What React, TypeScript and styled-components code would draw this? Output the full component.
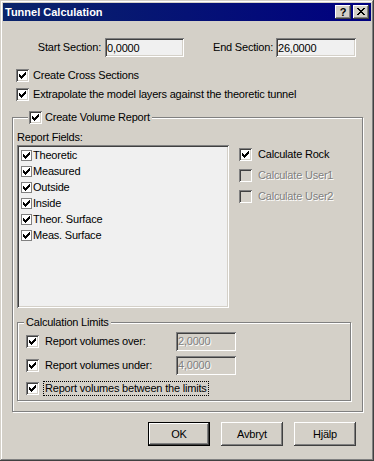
import React from 'react';
import styled, { createGlobalStyle } from 'styled-components';

const FACE = '#d4d0c8';
const FIELD = '#f0f0f0';
const raised = `inset -1px -1px #404040, inset 1px 1px #ffffff, inset -2px -2px #808080, inset 2px 2px ${FACE}`;
const sunken = `inset 1px 1px #808080, inset -1px -1px #ffffff, inset 2px 2px #404040, inset -2px -2px ${FACE}`;

const GlobalStyle = createGlobalStyle`
  html, body { margin: 0; padding: 0; background: ${FACE}; }
  body { font-family: "Liberation Sans", Arial, sans-serif; font-size: 11px; }
  *, *::before, *::after { box-sizing: border-box; }
`;

const Window = styled.div`
  width: 374px;
  height: 461px;
  padding: 3px;
  background: ${FACE};
  box-shadow: inset -1px -1px #404040, inset 1px 1px ${FACE}, inset -2px -2px #808080, inset 2px 2px #ffffff;
  display: flex;
  flex-direction: column;
  font-family: "Liberation Sans", Arial, sans-serif;
  font-size: 11px;
  line-height: 13px;
  color: #000;
`;

const TitleBar = styled.div`
  height: 18px;
  flex: none;
  display: flex;
  align-items: center;
  justify-content: space-between;
  padding: 0 2px;
  background: linear-gradient(to right, #0a246a, #000080);
  color: #fff;
  font-weight: bold;
`;

const TitleText = styled.span`
  white-space: nowrap;
`;

const TitleButtons = styled.div`
  display: flex;
  gap: 2px;
`;

const TitleButton = styled.span`
  width: 16px;
  height: 14px;
  display: flex;
  align-items: center;
  justify-content: center;
  background: ${FACE};
  box-shadow: ${raised};
  color: #000;
  font-weight: bold;
  font-size: 11px;
  line-height: 14px;
  padding-bottom: 1px;
`;

const Content = styled.div`
  display: flex;
  flex-direction: column;
  align-items: flex-start;
  letter-spacing: -0.2px;
`;

const SectionRow = styled.div`
  display: flex;
  align-items: center;
  height: 19px;
  margin-top: 17px;
`;

const FieldLabel = styled.label<{ $w: number; $mr: number }>`
  width: ${(p) => p.$w}px;
  margin-right: ${(p) => p.$mr}px;
  text-align: right;
  white-space: nowrap;
`;

const TextField = styled.input<{ $w: number }>`
  width: ${(p) => p.$w}px;
  height: 19px;
  margin: 0;
  padding: 0 2px;
  border: none;
  outline: none;
  font: inherit;
  letter-spacing: inherit;
  color: #000;
  background: ${FIELD};
  box-shadow: ${sunken};
  &:disabled {
    background: ${FACE};
    color: #808080;
    -webkit-text-fill-color: #808080;
    text-shadow: 1px 1px #ffffff;
    opacity: 1;
  }
`;

const MainOptions = styled.div`
  display: flex;
  flex-direction: column;
  gap: 6px;
  margin: 12px 0 0 13px;
`;

const CheckRow = styled.div<{ $gap: number; $disabled?: boolean }>`
  display: flex;
  align-items: center;
  gap: ${(p) => p.$gap}px;
  height: 13px;
  white-space: nowrap;
  color: ${(p) => (p.$disabled ? '#808080' : '#000')};
  text-shadow: ${(p) => (p.$disabled ? '1px 1px #ffffff' : 'none')};
`;

const Box = styled.span<{ $disabled?: boolean }>`
  width: 13px;
  height: 13px;
  flex: none;
  display: inline-flex;
  align-items: center;
  justify-content: center;
  background: ${(p) => (p.$disabled ? FACE : '#ffffff')};
  box-shadow: ${sunken};
`;

const SmallBox = styled.span`
  width: 11px;
  height: 11px;
  flex: none;
  display: inline-flex;
  align-items: center;
  justify-content: center;
  background: #ffffff;
  border: 1px solid #808080;
`;

const Group = styled.fieldset`
  margin: 0;
  min-width: 0;
  border: 1px solid #808080;
  box-shadow: inset 1px 1px #ffffff, 1px 1px #ffffff;
`;

const VolumeGroup = styled(Group)`
  width: 351px;
  margin: 10px 0 0 9px;
  padding: 7px 10px 10px 4px;
`;

const LimitsGroup = styled(Group)`
  width: 334px;
  margin-top: 8px;
  padding: 2px 0 3px 6px;
`;

const Legend = styled.legend<{ $ml: number; $pl: number }>`
  margin-left: ${(p) => p.$ml}px;
  padding: 0 2px 0 ${(p) => p.$pl}px;
  background: ${FACE};
  height: 13px;
  line-height: 13px;
  white-space: nowrap;
`;

const FieldsArea = styled.div`
  display: flex;
  align-items: flex-start;
`;

const FieldsColumn = styled.div`
  width: 212px;
  display: flex;
  flex-direction: column;
  gap: 1px;
`;

const ListBox = styled.div`
  width: 212px;
  height: 163px;
  padding: 2px 0 0 4px;
  background: ${FIELD};
  box-shadow: ${sunken};
`;

const ListItem = styled.div`
  height: 16px;
  display: flex;
  align-items: center;
  gap: 1px;
  white-space: nowrap;
`;

const CalcColumn = styled.div`
  display: flex;
  flex-direction: column;
  gap: 8px;
  margin: 17px 0 0 10px;
`;

const LimitsBody = styled.div`
  display: flex;
  flex-direction: column;
  gap: 4px;
  margin-left: 2px;
`;

const LimitRow = styled.div<{ $h: number }>`
  height: ${(p) => p.$h}px;
  display: grid;
  grid-template-columns: 150px 60px;
  align-items: center;
`;

const LimitCheck = styled.div`
  display: flex;
  align-items: center;
  gap: 4px;
  white-space: nowrap;
`;

const FocusLabel = styled.span<{ $focus?: boolean }>`
  padding: 0 1px;
  line-height: 13px;
  border: 1px dotted ${(p) => (p.$focus ? '#000' : 'transparent')};
`;

const ButtonRow = styled.div`
  align-self: stretch;
  display: flex;
  justify-content: flex-end;
  gap: 11px;
  margin-top: 10px;
  padding-right: 15px;
`;

const DialogButton = styled.button<{ $default?: boolean }>`
  width: 62px;
  height: 24px;
  margin: 0;
  padding: 0;
  font: inherit;
  letter-spacing: inherit;
  color: #000;
  background: ${FACE};
  border: ${(p) => (p.$default ? '1px solid #000' : 'none')};
  box-shadow: ${raised};
`;

const CheckGlyph = ({ size = 7 }: { size?: number }) => (
  <svg width={size} height={size} viewBox="0 0 7 7" shapeRendering="crispEdges">
    <path
      fill="#000"
      d="M6 0h1v1h-1z M5 1h2v1h-2z M0 2h1v1h-1z M4 2h3v1h-3z M0 3h2v1h-2z M3 3h3v1h-3z M0 4h5v1h-5z M1 5h3v1h-3z M2 6h1v1h-1z"
    />
  </svg>
);

const CloseGlyph = () => (
  <svg width={8} height={7} viewBox="0 0 8 7" shapeRendering="crispEdges">
    <path
      fill="#000"
      d="M0 0h2v1h-2z M6 0h2v1h-2z M1 1h2v1h-2z M5 1h2v1h-2z M2 2h4v1h-4z M3 3h2v1h-2z M2 4h4v1h-4z M1 5h2v1h-2z M5 5h2v1h-2z M0 6h2v1h-2z M6 6h2v1h-2z"
    />
  </svg>
);

const CheckBox = ({ checked, disabled }: { checked?: boolean; disabled?: boolean }) => (
  <Box $disabled={disabled}>{checked && <CheckGlyph />}</Box>
);

const fields = ['Theoretic', 'Measured', 'Outside', 'Inside', 'Theor. Surface', 'Meas. Surface'];

export default function App() {
  return (
    <>
      <GlobalStyle />
      <Window>
        <TitleBar>
          <TitleText>Tunnel Calculation</TitleText>
          <TitleButtons>
            <TitleButton>?</TitleButton>
            <TitleButton>
              <CloseGlyph />
            </TitleButton>
          </TitleButtons>
        </TitleBar>
        <Content>
          <SectionRow>
            <FieldLabel $w={98} $mr={4}>Start Section:</FieldLabel>
            <TextField $w={79} readOnly value="0,0000" />
            <FieldLabel $w={89} $mr={3}>End Section:</FieldLabel>
            <TextField $w={80} readOnly value="26,0000" />
          </SectionRow>
          <MainOptions>
            <CheckRow $gap={4}>
              <CheckBox checked />
              Create Cross Sections
            </CheckRow>
            <CheckRow $gap={4}>
              <CheckBox checked />
              Extrapolate the model layers against the theoretic tunnel
            </CheckRow>
          </MainOptions>
          <VolumeGroup>
            <Legend $ml={11} $pl={1}>
              <CheckRow $gap={3}>
                <CheckBox checked />
                Create Volume Report
              </CheckRow>
            </Legend>
            <FieldsArea>
              <FieldsColumn>
                <span>Report Fields:</span>
                <ListBox>
                  {fields.map((f) => (
                    <ListItem key={f}>
                      <SmallBox>
                        <CheckGlyph />
                      </SmallBox>
                      {f}
                    </ListItem>
                  ))}
                </ListBox>
              </FieldsColumn>
              <CalcColumn>
                <CheckRow $gap={6}>
                  <CheckBox checked />
                  Calculate Rock
                </CheckRow>
                <CheckRow $gap={6} $disabled>
                  <CheckBox disabled />
                  Calculate User1
                </CheckRow>
                <CheckRow $gap={6} $disabled>
                  <CheckBox disabled />
                  Calculate User2
                </CheckRow>
              </CalcColumn>
            </FieldsArea>
            <LimitsGroup>
              <Legend $ml={0} $pl={2}>Calculation Limits</Legend>
              <LimitsBody>
                <LimitRow $h={20}>
                  <LimitCheck>
                    <CheckBox checked />
                    <FocusLabel>Report volumes over:</FocusLabel>
                  </LimitCheck>
                  <TextField $w={60} disabled value="2,0000" />
                </LimitRow>
                <LimitRow $h={20}>
                  <LimitCheck>
                    <CheckBox checked />
                    <FocusLabel>Report volumes under:</FocusLabel>
                  </LimitCheck>
                  <TextField $w={60} disabled value="4,0000" />
                </LimitRow>
                <LimitRow $h={18}>
                  <LimitCheck>
                    <CheckBox checked />
                    <FocusLabel $focus>Report volumes between the limits</FocusLabel>
                  </LimitCheck>
                </LimitRow>
              </LimitsBody>
            </LimitsGroup>
          </VolumeGroup>
          <ButtonRow>
            <DialogButton $default>OK</DialogButton>
            <DialogButton>Avbryt</DialogButton>
            <DialogButton>Hjälp</DialogButton>
          </ButtonRow>
        </Content>
      </Window>
    </>
  );
}
